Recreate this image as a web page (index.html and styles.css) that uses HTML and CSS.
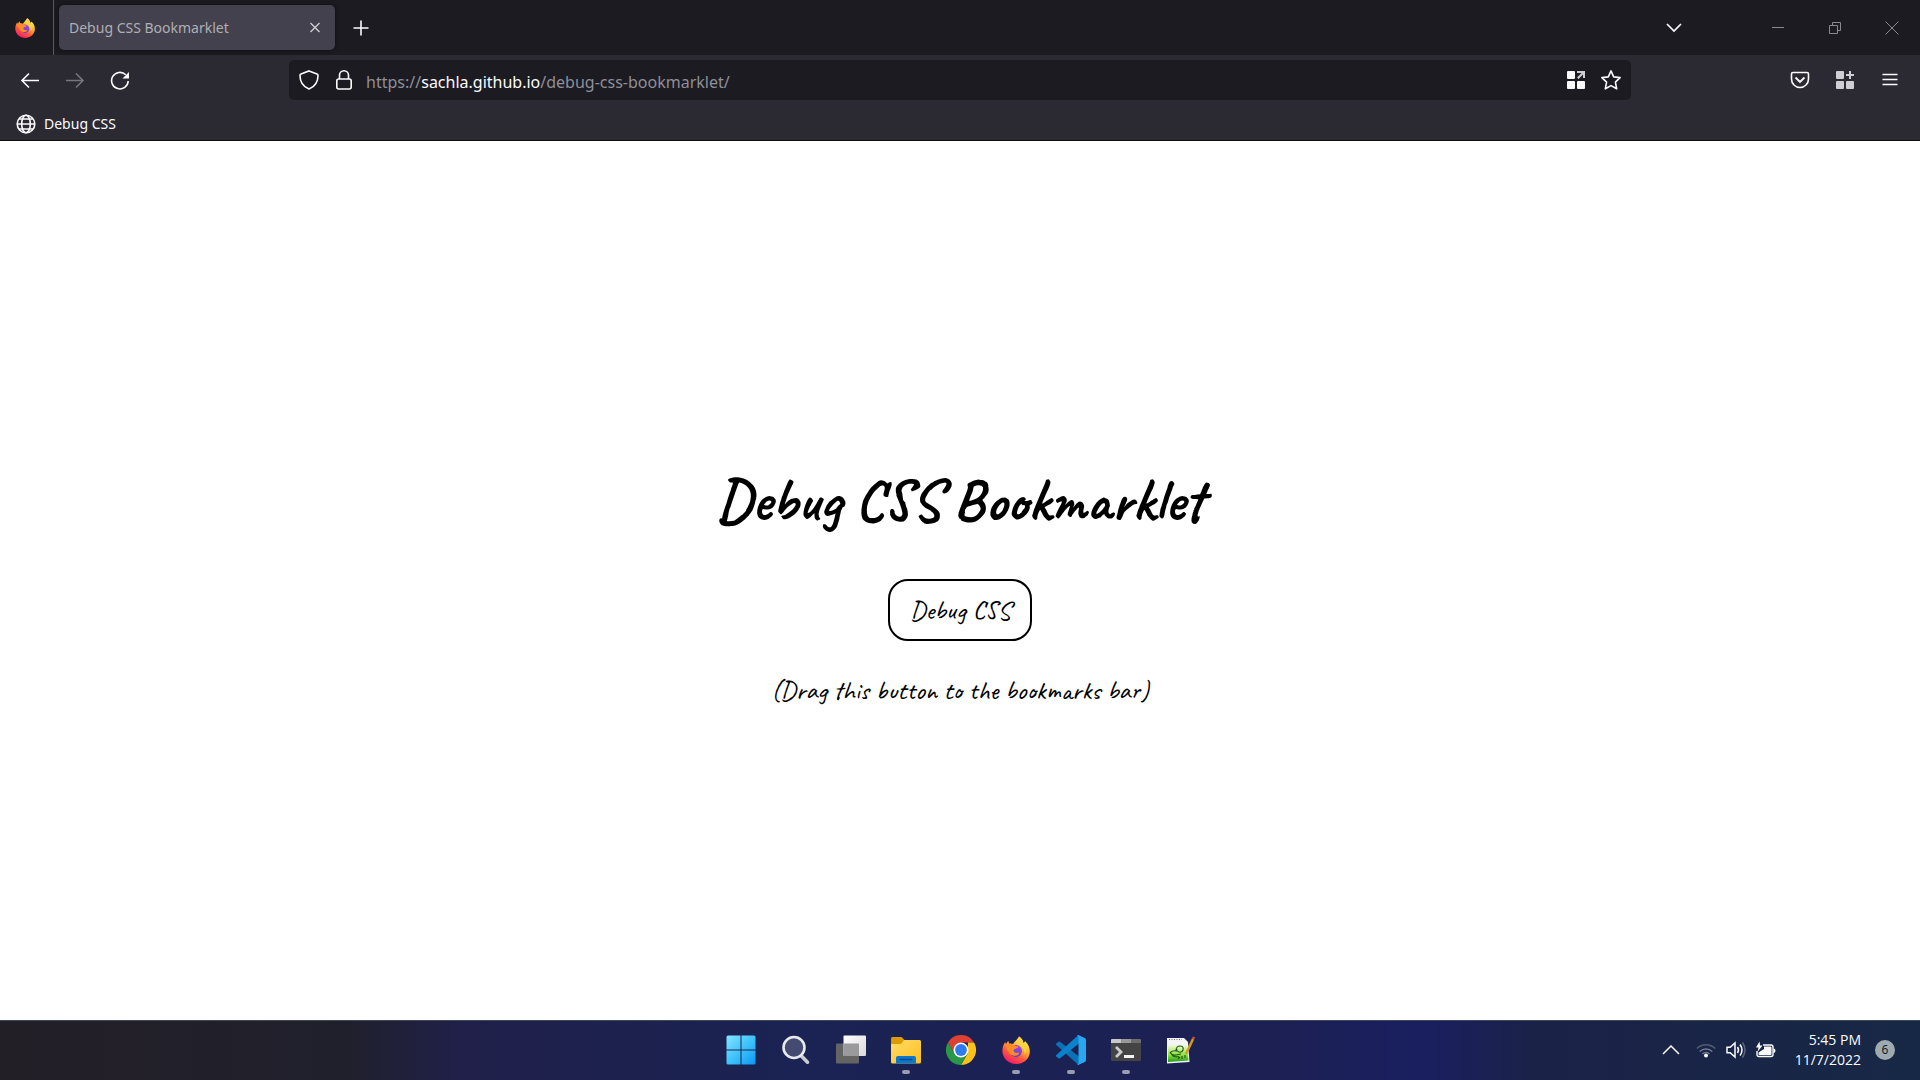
FILE: index.html
```html
<!DOCTYPE html>
<html lang="en">
<head>
<meta charset="utf-8">
<title>Debug CSS Bookmarklet</title>
<link rel="stylesheet" href="styles.css">
</head>
<body>
<svg class="defs" aria-hidden="true">
  <defs>
    <linearGradient id="flame" x1=".8" y1=".1" x2=".3" y2="1"><stop offset="0" stop-color="#fff44f"/><stop offset=".35" stop-color="#ffb02e"/><stop offset=".65" stop-color="#ff5a3c"/><stop offset="1" stop-color="#f5156c"/></linearGradient>
    <linearGradient id="globe" x1=".7" y1="0" x2=".4" y2="1"><stop offset="0" stop-color="#a545ea"/><stop offset="1" stop-color="#5b3fd0"/></linearGradient>
    <linearGradient id="win" x2="1" y2="1"><stop offset="0" stop-color="#85e5ff"/><stop offset=".5" stop-color="#3fc3fb"/><stop offset="1" stop-color="#0d97f5"/></linearGradient>
    <linearGradient id="folder" x2="1" y2="1"><stop offset="0" stop-color="#ffdc66"/><stop offset="1" stop-color="#ffc020"/></linearGradient>
    <linearGradient id="pane" x2="1" y2="1"><stop offset="0" stop-color="#fff"/><stop offset="1" stop-color="#d8d8dc"/></linearGradient>
    <linearGradient id="grass" x2="0" y2="1"><stop offset="0" stop-color="#f3f9dc"/><stop offset=".6" stop-color="#8be03a"/><stop offset="1" stop-color="#1f9c1a"/></linearGradient>
    <symbol id="firefox" viewBox="0 0 28 28">
      <path fill="url(#flame)" d="M17 .5c3 2 4 4 4.400 6.400C22.600 6.500 22.800 5.800 23 5c3.600 3.300 5 7.200 4.800 11.200C27.400 23 21.500 28 14.200 28 6.500 28 .4 22.300.4 14.800.4 11 1.500 8.200 3.300 5.900l.5 2.400L6.300 4.700 7 7.500c1.600-.3 3 0 4.200.6C12.700 4.600 16 4 17 .5z"/>
      <circle cx="14" cy="15" r="6" fill="url(#globe)"/>
      <path fill="#ff8c26" d="M4.500 9c3-1.800 6-1.300 8.500.7l3.200.8c-.4 1.600-1.800 2.200-3.600 2.600-1 .8-1.200 1.600-.6 2.600 1.600 1.600 3.600.5 5.400 1.200-1 2.300-3.800 3.500-6.300 2.700C7 18.500 4.200 14 4.500 9z"/>
      <path fill="#ffd23f" d="M17 .5c3 2 4 4 4.400 6.400 3 4 3.300 8.300 1.300 12.100.2-4.500-1.700-7.500-5.200-9.500-2.500-1.400-3.700-3.400-2.800-5.700C15.500 2.800 16.600 2 17 .5z"/>
    </symbol>
  </defs>
</svg>

<header class="browser">
  <div class="tabs">
    <button class="view" aria-label="Firefox View"><svg width="20" height="20"><use href="#firefox"/></svg></button>
    <div class="tab"><span>Debug CSS Bookmarklet</span>
      <button class="tab-close" aria-label="Close tab"><svg width="12" height="12" viewBox="0 0 12 12"><path stroke-width="1.300" d="M1.500 1l9 9M10.500 1l-9 9"/></svg></button>
    </div>
    <button class="tool new-tab" aria-label="New tab"><svg width="16" height="16" viewBox="0 0 16 16"><path stroke-width="1.600" d="M8 .5v15M.5 8h15"/></svg></button>
    <button class="tool tab-list" aria-label="List all tabs"><svg width="18" height="18" viewBox="0 0 18 18"><path stroke-width="1.700" d="M2 5l7 7 7-7"/></svg></button>
    <div class="window-controls">
      <button aria-label="Minimize"><svg width="14" height="14" viewBox="0 0 14 14"><path d="M1 6.500h12"/></svg></button>
      <button aria-label="Restore"><svg width="14" height="14" viewBox="0 0 14 14"><path d="M1.500 4.500h8v8h-8zM4.500 4.500v-3h8v8h-3"/></svg></button>
      <button aria-label="Close"><svg width="14" height="14" viewBox="0 0 14 14"><path d="M.5.5l13 13M13.500.5l-13 13"/></svg></button>
    </div>
  </div>

  <div class="toolbar">
    <div class="tools">
      <button class="tool" aria-label="Back"><svg width="20" height="20" viewBox="0 0 20 20"><path stroke-width="1.600" d="M19 10.500H2M9 3.500l-7 7 7 7"/></svg></button>
      <button class="tool faded" aria-label="Forward" disabled><svg width="20" height="20" viewBox="0 0 20 20"><path stroke-width="1.600" d="M1 10.500h17M11 3.500l7 7-7 7"/></svg></button>
      <button class="tool" aria-label="Reload"><svg width="20" height="20" viewBox="0 0 20 20"><path stroke-width="1.600" d="M18.200 11A8.300 8.300 0 1 1 15.700 4.700"/><path class="solid" d="M19 2v6.500h-6.500z"/></svg></button>
    </div>
    <form class="address">
      <button type="button" aria-label="Tracking protection"><svg width="20" height="20" viewBox="0 0 20 20"><path stroke-width="1.600" d="M10 .9l8 3.200q1 .4 1 1.500c0 6-2.500 11-9 13.500C3.500 16.600 1 11.600 1 5.600Q1 4.500 2 4.100z"/></svg></button>
      <button type="button" aria-label="Site security"><svg width="20" height="20" viewBox="0 0 20 20"><rect x="2.800" y="9" width="14.400" height="10" rx="2" stroke-width="1.600"/><path stroke-width="1.600" d="M5.500 9V5.300a4.500 4.500 0 0 1 9 0V9"/></svg></button>
      <p class="url">https://<b>sachla.github.io</b>/debug-css-bookmarklet/</p>
      <button type="button" aria-label="Extension"><svg width="18" height="18" viewBox="0 0 18 18"><path class="solid" d="M1 0h6q1 0 1 1v6q0 1-1 1H1Q0 8 0 7V1q0-1 1-1zM1 10h6q1 0 1 1v6q0 1-1 1H1q-1 0-1-1v-6q0-1 1-1zM11 10h6q1 0 1 1v6q0 1-1 1h-6q-1 0-1-1v-6q0-1 1-1z"/><path class="gray" d="M10 0h8v7h-2V3.500L11.500 8 10 6.500 14.500 2H10z"/></svg></button>
      <button type="button" aria-label="Bookmark this page"><svg width="20" height="20" viewBox="0 0 20 20"><path stroke-width="1.600" stroke-linejoin="round" d="M10 .9l2.700 6 6.400.7-4.700 4.500 1.300 6.700-5.700-3.200-5.700 3.200 1.300-6.700L.9 7.600l6.400-.7z"/></svg></button>
    </form>
    <div class="tools end">
      <button class="tool" aria-label="Save to Pocket"><svg width="20" height="20" viewBox="0 0 20 20"><path stroke-width="1.600" d="M3 2.500h14q1.500 0 1.500 1.500V9a8.500 8.500 0 0 1-17 0V4Q1.500 2.500 3 2.500z"/><path stroke-width="1.800" d="M5.500 7.500l4.500 4.500 4.500-4.500"/></svg></button>
      <button class="tool" aria-label="Extensions"><svg width="18" height="18" viewBox="0 0 18 18"><path class="gray" d="M1 0h6q1 0 1 1v6q0 1-1 1H1Q0 8 0 7V1q0-1 1-1zM1 10h6q1 0 1 1v6q0 1-1 1H1q-1 0-1-1v-6q0-1 1-1zM11 10h6q1 0 1 1v6q0 1-1 1h-6q-1 0-1-1v-6q0-1 1-1zM13 0h2v3h3v2h-3v3h-2V5h-3V3h3z"/></svg></button>
      <button class="tool" aria-label="Menu"><svg width="16" height="16" viewBox="0 0 16 16"><path stroke-width="1.500" d="M.5 2.500h15M.5 7.500h15M.5 12.500h15"/></svg></button>
    </div>
  </div>

  <nav class="bookmarks">
    <a href="#"><svg width="20" height="20" viewBox="0 0 20 20"><g stroke-width="1.600"><circle cx="10" cy="10" r="8.800"/><ellipse cx="10" cy="10" rx="4.300" ry="8.800"/><path d="M1.200 10h17.600M3 5h14M3 15h14"/></g></svg>Debug CSS</a>
  </nav>
</header>

<main class="page">
  <h1>Debug CSS Bookmarklet</h1>
  <a class="bookmarklet" href="#">Debug CSS</a>
  <p>(Drag this button to the bookmarks bar)</p>
</main>

<footer class="taskbar">
  <div class="apps">
    <button aria-label="Start"><svg width="30" height="30" viewBox="0 0 30 30"><path fill="url(#win)" d="M2 .5h12.500v14H.5V2Q.5.5 2 .5zM15.500.5H28q1.500 0 1.500 1.500v12.500h-14zM.5 15.500h14v14H2Q.5 29.500.5 28zM15.500 15.500h14V28q0 1.500-1.500 1.500H15.500z"/></svg></button>
    <button aria-label="Search"><svg width="30" height="30" viewBox="0 0 30 30"><path d="M19.500 20l7 7.200" stroke="#c9ccd0" stroke-width="3.600" stroke-linecap="round"/><circle cx="13" cy="12.500" r="10.500" fill="#454b70" stroke="#e8eaed" stroke-width="2.600"/></svg></button>
    <button aria-label="Task view"><svg width="30" height="30" viewBox="0 0 30 30"><rect y="8.500" width="23" height="20" rx="1" fill="#646464"/><rect x="7.500" y=".5" width="22.500" height="20.500" rx="1" fill="url(#pane)"/><path fill="#9a9a9c" d="M7.500 8.500H23V21H7.500z"/></svg></button>
    <button class="open" aria-label="File Explorer"><svg width="30" height="30" viewBox="0 0 30 30"><path fill="#dc9c00" d="M1.500 2h9l3 3v6H0V3.500Q0 2 1.500 2z"/><path fill="url(#folder)" d="M0 9h10l3-4h15.500Q30 5 30 6.500V27q0 1.500-1.500 1.500h-27Q0 28.500 0 27z"/><path fill="#0c78cc" d="M7 21h16q2 0 2 2v5.500H5V23q0-2 2-2z"/><path d="M8.500 24.500h13" stroke="#084b8c" stroke-width="1.500"/></svg></button>
    <button aria-label="Chrome"><svg width="30" height="30" viewBox="0 0 30 30"><path fill="#de4033" d="M2 7.500A15 15 0 0 1 28 7.500H15L8.500 18.700z"/><path fill="#fbc116" d="M28 7.500A15 15 0 0 1 15 30l6.500-11.200L22 7.500z"/><path fill="#289847" d="M2 7.500A15 15 0 0 0 15 30l6.500-11.200-13 0z"/><circle cx="15" cy="15" r="7.500" fill="#fff"/><circle cx="15" cy="15" r="5.900" fill="#2c7cf0"/></svg></button>
    <button class="open" aria-label="Firefox"><svg width="28" height="28"><use href="#firefox"/></svg></button>
    <button class="open" aria-label="Visual Studio Code"><svg width="30" height="30" viewBox="0 0 30 30"><path fill="#0a73b7" d="M2.500 6.700L.3 8.600q-.7.800 0 1.500L22.500 30l5-5L4 6.700q-.8-.6-1.500 0z"/><path fill="#0a82cc" d="M2.500 23.300L.3 21.400q-.7-.8 0-1.500L22.500 0l5 5L4 23.300q-.8.600-1.500 0z"/><path fill="#2ba6ee" d="M21 29.500c.8.500 1.500.5 2.300.1l5.500-2.600q1.200-.6 1.200-2V5q0-1.400-1.200-2L23.300.4c-.8-.4-1.500-.4-2.300.1 1 .1 1.500.8 1.500 1.800v25.400c0 1-.5 1.700-1.500 1.800z"/></svg></button>
    <button class="open" aria-label="Terminal"><svg width="30" height="30" viewBox="0 0 30 30"><rect y="4" width="30" height="22" rx="1.500" fill="#444"/><path fill="#c8c8c8" d="M1 4h9.500v4H0V5q0-1 1-1z"/><path fill="#999" d="M10.500 4H20v4h-9.500z"/><path fill="#6d6d6d" d="M20 4h9q1 0 1 1v3H20z"/><path d="M5 12l5 5-5 5" stroke="#ccc" stroke-width="2.800"/><path fill="#f2f2f2" d="M13 20h10v3H13z"/></svg></button>
    <button aria-label="Notepad++"><svg width="30" height="30" viewBox="0 0 30 30"><path fill="#f4f4f4" d="M1 3h17l4 4 1.500 20L1 28.500z"/><path fill="url(#grass)" d="M2 10h19l1.500 15.500L2 27z"/><path d="M3 4.500h13" stroke="#777" stroke-dasharray="1 1.500"/><path d="M4 18q2-3 6-2 0-5 4-5t3 4q-1 3-4 2-3-1-2-3M4 17q2 4 6 3l5-1M6 20.500q3 2 7 1M12 24l2-2M16 21v3M19 20v3" stroke="#245c1b" stroke-width="1.200"/><path d="M20 19l7-15" stroke="#d9991d" stroke-width="2.500"/><path d="M27 4l1-2" stroke="#d84c3b" stroke-width="2.500"/></svg></button>
  </div>
  <div class="tray">
    <button class="more" aria-label="Show hidden icons"><svg width="18" height="10" viewBox="0 0 18 10"><path stroke-width="1.500" d="M1 9l8-8 8 8"/></svg></button>
    <button class="status" aria-label="Network, volume and battery">
      <svg width="20" height="16" viewBox="0 0 20 16"><g stroke="#fff" stroke-width="1.500"><path opacity=".25" d="M.8 6.500a13 13 0 0 1 18.400 0"/><path opacity=".4" d="M3.700 9.500a9 9 0 0 1 12.600 0"/><path opacity=".4" d="M6.500 12a5 5 0 0 1 7 0"/></g><circle class="solid" cx="10" cy="13.500" r="2"/></svg>
      <svg width="20" height="18" viewBox="0 0 20 18"><path stroke-width="1.500" d="M1 6.200h3.200L9 2v14l-4.800-4.200H1zM11.500 6q2 3 0 6"/><path stroke-width="1.500" d="M14 3.500q4 5.500 0 11"/><path stroke-width="1.500" opacity=".3" d="M16.500 1.500q5 7.500 0 15"/></svg>
      <svg width="20" height="18" viewBox="0 0 20 18"><path stroke-width="1.400" d="M7 4h8q2 0 2 2v7.500q0 2-2 2H3q-2 0-2-2V10"/><path class="solid" d="M8 5.500h6.500q1 0 1 1V13q0 1-1 1h-11q-1 0-1-1v-1.500L8 8zM17.500 7.500q2 0 2 2.200t-2 2.200zM3.500.5L0 6.500h2.500L1.500 11 6.500 4.500H4z"/></svg>
    </button>
    <div class="clock"><time>5:45 PM</time><time>11/7/2022</time></div>
    <span class="count">6</span>
  </div>
</footer>
</body>
</html>
```
FILE: styles.css
```css
* { box-sizing: border-box; }
body {
  margin: 0;
  min-height: 100vh;
  display: flex;
  flex-direction: column;
  background: #fff;
  color: #fbfbfe;
  font-family: "Segoe UI", "Noto Sans", "Open Sans", sans-serif;
}
button {
  display: flex;
  align-items: center;
  justify-content: center;
  padding: 0;
  border: 0;
  background: none;
  color: inherit;
  font: inherit;
}
svg { display: block; fill: none; stroke: none; flex: none; }
.defs { position: absolute; width: 0; height: 0; }
.browser svg, .tray svg { stroke: currentColor; }
.browser .solid, .tray .solid { fill: currentColor; stroke: none; }
.gray { fill: #cfcfd3; stroke: none; }
.browser .view svg { stroke: none; }
p, h1 { margin: 0; }

.browser { background: #2b2a33; border-bottom: 1px solid #0c0c0d; }
.tabs { display: flex; align-items: center; height: 55px; background: #1c1b22; }
.view { width: 54px; height: 55px; padding-right: 4px; border-right: 1px solid #5a5960; }
.tab {
  display: flex;
  align-items: center;
  justify-content: space-between;
  width: 276px;
  height: 45px;
  margin-left: 5px;
  padding: 0 8px 0 10px;
  border-radius: 5px;
  background: #42414d;
  box-shadow: 0 0 4px #0c0c0d;
  color: #afafb5;
  font-size: 14px;
}
.tab-close { width: 24px; height: 24px; color: #d0d0d6; }
.tool { width: 40px; height: 40px; }
.new-tab { margin-left: 6px; }
.tab-list { margin-left: auto; margin-right: 55px; }
.window-controls { display: flex; color: #8a898f; }
.window-controls button { width: 57px; height: 55px; }

.toolbar {
  display: grid;
  grid-template-columns: auto 1fr 9fr 1fr auto;
  align-items: center;
  height: 50px;
  padding: 0 10px;
}
.tools { display: flex; gap: 5px; }
.end { grid-column: 5; }
.faded { color: #77767d; }
.address {
  grid-column: 3;
  display: flex;
  align-items: center;
  height: 40px;
  padding: 0 2px;
  border-radius: 5px;
  background: #1c1b22;
}
.address button { width: 35px; height: 35px; }
.url { flex: 1; padding: 3px 0 0 5px; color: #8f8f97; font-size: 16px; }
.url b { color: #fbfbfe; font-weight: 400; }
.bookmarks { display: flex; align-items: center; height: 35px; padding: 2px 16px 0; }
.bookmarks a { display: flex; align-items: center; gap: 8px; color: inherit; font-size: 14px; text-decoration: none; }

.page {
  flex: 1;
  display: flex;
  flex-direction: column;
  align-items: center;
  justify-content: center;
  gap: 32px;
  color: #000;
  font-family: Caveat, cursive;
  font-size: 27px;
  line-height: 34px;
}
.page h1 { font-size: 59px; font-weight: 600; line-height: 92px; }
.bookmarklet {
  padding: 12px 20px;
  border: 2px solid #000;
  border-radius: 20px;
  color: #000;
  text-decoration: none;
}

.taskbar {
  display: grid;
  grid-template-columns: 1fr auto 1fr;
  height: 60px;
  padding-left: 1px;
  border-top: 1px solid #3c4858;
  background: linear-gradient(90deg, #231f27, #20202c 18%, #20204a 24%, #1a2353 42%, #1c2052 66%, #1a1f60 74%, #1b2248 80%, #172845);
}
.apps { grid-column: 2; display: flex; }
.apps button { position: relative; width: 55px; height: 58px; }
.open::after {
  content: "";
  position: absolute;
  bottom: 5px;
  width: 8px;
  height: 4px;
  border-radius: 2px;
  background: #9a9cb2;
}
.tray { display: flex; align-items: center; justify-content: flex-end; height: 58px; padding-right: 25px; }
.more { width: 40px; height: 40px; }
.status { gap: 10px; padding: 0 5px; }
.clock { display: flex; flex-direction: column; align-items: flex-end; margin: 0 14px; font-family: "Segoe UI", "Open Sans", sans-serif; font-size: 14px; line-height: 20px; }
.count { width: 20px; height: 20px; border-radius: 10px; background: #9eaab0; color: #15202c; font-size: 12px; line-height: 20px; text-align: center; }
```
